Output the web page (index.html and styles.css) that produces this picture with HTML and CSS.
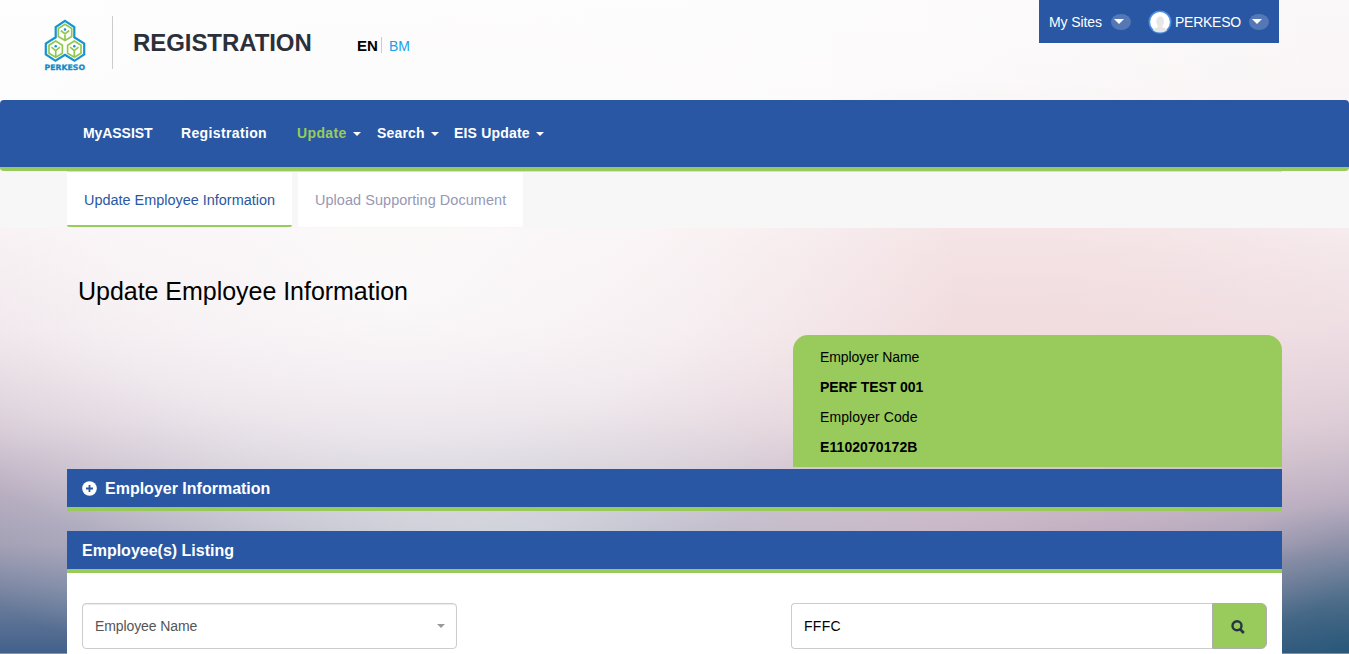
FILE: index.html
```html
<!DOCTYPE html>
<html lang="en">
<head>
<meta charset="utf-8">
<title>Update Employee Information</title>
<link rel="stylesheet" href="styles.css">
</head>
<body>
<header class="top">
  <svg class="logo" width="44" height="54" viewBox="43 18 44 54">
    <path class="outline" d="M65 20.800 74.300 27V37.300L84.200 43.500V54.500L74.500 60.800 65 54.800 55.500 60.800 45.800 54.500V43.500L55.700 37.300V27Z"/>
    <g class="cube">
      <path id="cube" d="M65 24.300 71.700 28.500V36.500L65 40.500 58.300 36.500V28.500ZM60.800 30.500 65 34 69.200 30.500M65 33.500V39.500"/>
      <use href="#cube" x="-9.300" y="16.700"/>
      <use href="#cube" x="9.300" y="16.700"/>
    </g>
    <g class="dot"><circle cx="65" cy="29.500" r="1.3"/><circle cx="55.700" cy="46.200" r="1.3"/><circle cx="74.300" cy="46.200" r="1.3"/></g>
    <text x="44.6" y="69.5" textLength="40.4" lengthAdjust="spacingAndGlyphs">PERKESO</text>
  </svg>
  <h1 class="site">REGISTRATION</h1>
  <div class="lang"><b>EN</b><a>BM</a></div>
  <div class="user">
    <span class="sites">My Sites</span><i class="pill"></i>
    <svg class="avatar" width="24" height="24" viewBox="0 0 24 24"><circle cx="12" cy="12" r="10.7" fill="#fff" stroke="#4a8ee0" stroke-width="1.6"/><path d="M5 20.2c.6-2.4 4.600-2.300 5.200-4-1.400-1.400-2-3-1.800-5.400.1-2.700 1.500-4.300 3.800-4.300s3.700 1.600 3.800 4.300c.1 2.400-.5 4-1.800 5.400.5 1.700 4.200 1.600 4.800 4-3.800 3-10 3-14 0z" fill="#e6e6e6"/></svg>
    <span class="name">PERKESO</span><i class="pill"></i>
  </div>
</header>
<nav class="nav">
  <a class="n1">MyASSIST</a><a class="n2">Registration</a><a class="n3 on">Update<i class="caret"></i></a><a class="n4">Search<i class="caret"></i></a><a class="n5">EIS Update<i class="caret"></i></a>
</nav>
<div class="tabbar"><div class="tabs">
  <a class="tab active">Update Employee Information</a><a class="tab upload">Upload Supporting Document</a>
</div></div>
<main class="main">
  <h2 class="title">Update Employee Information</h2>
  <section class="employer">
    <p>Employer Name</p><p><b>PERF TEST 001</b></p><p>Employer Code</p><p><b>E1102070172B</b></p>
  </section>
  <div class="bar first">
    <svg width="15" height="15" viewBox="0 0 15 15"><circle cx="7.5" cy="7.500" r="7.3" fill="#fff"/><path d="M4 7.500h7M7.500 4v7" stroke="#2957a4" stroke-width="1.800"/></svg>
    <span>Employer Information</span>
  </div>
  <div class="bar">Employee(s) Listing</div>
  <div class="panel">
    <div class="select"><span>Employee Name</span><i class="caret"></i></div>
    <div class="search"><div class="field">FFFC</div><div class="go">
      <svg width="14" height="14" viewBox="0 0 14 14"><circle cx="6" cy="5.800" r="4.500" fill="none" stroke="#263640" stroke-width="2.400"/><path d="M9 9l3.800 4" stroke="#263640" stroke-width="2.600"/></svg>
    </div></div>
  </div>
</main>
</body>
</html>
```
FILE: styles.css
```css
* { box-sizing: border-box; }
body {
  margin: 0;
  height: 654px;
  overflow: hidden;
  font: 14px/20px "Liberation Sans", Arial, sans-serif;
  color: #000;
  background:
    linear-gradient(rgba(255,255,255,0) 653px, rgba(200,200,200,.5) 653px),
    radial-gradient(ellipse 560px 290px at 400px 290px, rgba(253,252,252,.85), rgba(252,250,251,.6) 50%, rgba(250,250,250,0)),
    radial-gradient(ellipse 520px 260px at 1010px 340px, rgba(243,219,220,.8), rgba(243,219,221,.45) 50%, rgba(244,218,219,0)),
    radial-gradient(ellipse 560px 150px at 500px 540px, rgba(206,211,219,.9), rgba(210,215,222,0)),
    radial-gradient(ellipse 420px 120px at 960px 545px, rgba(190,166,190,.85), rgba(194,170,192,0)),
    linear-gradient(90deg, rgba(254,254,254,.9), rgba(254,254,254,.8) 50%, rgba(250,240,240,0)) 0 0 / 100% 100px no-repeat,
    radial-gradient(ellipse 200px 150px at 1349px 654px, rgba(20,80,105,.55), rgba(20,80,105,0)),
    linear-gradient(#fbf8f9 0, #f7eff1 230px, #ece0e6 330px, #d5c8d4 420px, #bdb1c3 480px, #9f9bb2 545px, #6b7c9b 602px, #41608a 654px);
}
.top { height: 100px; display: flex; align-items: flex-start; padding-left: 43px; }
.logo { margin-top: 18px; }
.outline { fill: #fff; stroke: #1494d2; stroke-width: 2.200; }
.cube { fill: none; stroke: #92c850; stroke-width: 1.700; }
.dot { fill: #1494d2; }
.logo text { font: bold 7.500px "DejaVu Sans", sans-serif; fill: #1189ca; stroke: #1189ca; stroke-width: .3; }
.site { margin: 16px 0 0 25px; padding-left: 20px; border-left: 1px solid #ccc; height: 53px; width: 245px; font-size: 24px; line-height: 54px; color: #2b303b; letter-spacing: -.07px; }
.lang { display: flex; margin-top: 37px; font-size: 15px; line-height: 18px; height: 16px; }
.lang b { width: 25px; border-right: 1px solid #ccc; }
.lang a { margin-left: 7px; color: #1a9fe8; font-size: 14px; }
.user { display: flex; align-items: center; margin-left: auto; margin-right: 70px; width: 240px; height: 43px; padding-left: 10px; background: #2957a4; color: #fff; }
.sites { width: 62px; letter-spacing: -.1px; }
.pill { width: 20px; height: 16px; border-radius: 50%; background: #5478b6; display: flex; align-items: center; justify-content: center; }
.pill::after { content: ""; border: solid transparent; border-width: 5px 5px 0; border-top-color: #fff; margin-right: 4px; }
.avatar { margin: 0 3px 0 17px; }
.name { width: 74px; letter-spacing: -.25px; }
.nav { height: 71px; display: flex; align-items: center; background: #2957a4; border-bottom: 4px solid #99cb5c; border-radius: 4px; padding: 0 0 2px 83px; color: #fff; font-weight: bold; letter-spacing: .36px; }
.nav a { display: flex; align-items: center; }
.n1 { width: 98px; letter-spacing: -.07px; }
.n2 { width: 116px; }
.n3 { width: 80px; }
.n4 { width: 77px; letter-spacing: .18px; }
.n5 { letter-spacing: .18px; }
.on { color: #99cb5c; }
.caret { border: solid transparent; border-width: 4px 4px 0; border-top-color: currentColor; }
.nav .caret { margin: 2px 0 0 6px; border-top-color: #fff; }
.tabbar { height: 57px; background: #f7f7f7; padding: 0 67px; }
.tabs { display: flex; gap: 6px; border-top: 1px solid #dddbe2; height: 56px; }
.tab { width: 225px; background: #fff; padding: 18px 0 0 17px; font-size: 14.440px; color: #9698b4; border-radius: 0 0 2px 2px; }
.upload { letter-spacing: .07px; }
.active { color: #2957a4; border-bottom: 2px solid #99cb5c; }
.main { padding: 0 67px; display: flex; flex-direction: column; }
.title { margin: 47px 0 0 11px; font-size: 25px; line-height: 32px; font-weight: normal; letter-spacing: -.03px; }
.employer { align-self: flex-end; margin-top: 28px; width: 489px; height: 132px; padding: 7px 0 0 27px; background: #99cb5c; border-radius: 15px 15px 0 0; line-height: 30px; letter-spacing: -.08px; }
.employer p { margin: 0; }
.employer p:nth-child(n+3) { letter-spacing: .08px; }
.bar { display: flex; align-items: center; gap: 8px; height: 42px; padding: 1px 0 0 15px; background: #2957a4; border-bottom: 4px solid #99cb5c; color: #fff; font-size: 16px; font-weight: bold; }
.first { margin: 2px 0 20px; }
.panel { height: 81px; padding: 30px 15px 0; background: #fff; display: flex; justify-content: space-between; }
.select { width: 375px; height: 46px; border: 1px solid #ccc; border-radius: 4px; box-shadow: inset 0 1px 1px rgba(0,0,0,.08); padding: 0 11px 0 12px; display: flex; align-items: center; justify-content: space-between; color: #555; letter-spacing: -.1px; }
.select .caret { border-top-color: #999; }
.search { width: 476px; height: 46px; display: flex; }
.field { flex: 1; border: 1px solid #ccc; border-right: 0; border-radius: 4px 0 0 4px; padding-left: 12px; line-height: 44px; letter-spacing: .3px; }
.go { width: 55px; border: 1px solid #adadad; border-radius: 0 6px 6px 0; background: #99cb5c; display: flex; align-items: center; justify-content: center; padding: 2px 4px 0 0; }
```
